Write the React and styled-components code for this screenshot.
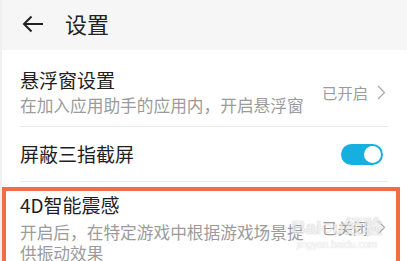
import React from "react";
import styled, { createGlobalStyle } from "styled-components";

const Global = createGlobalStyle`
  html, body { margin: 0; padding: 0; background: #fff; }
  body { font-family: "Noto Sans CJK SC", "Noto Sans", sans-serif; }
  * { box-sizing: border-box; }
`;

const Page = styled.div`
  position: relative;
  width: 407px;
  height: 261px;
  overflow: hidden;
  background: #fff;
  border-left: 2px solid #f0f0f0;
`;

const Header = styled.div`
  height: 50px;
  background: #f6f6f6;
  display: flex;
  align-items: center;
  padding-left: 20px;
  gap: 21px;
`;

const HeaderTitle = styled.div`
  font-size: 22px;
  line-height: 28px;
  color: #222;
  margin-top: -4px;
`;

const BackIcon = styled.svg`
  width: 22px;
  height: 18px;
  margin-top: -2px;
`;

const Row = styled.div`
  margin: 0 19px 0 18px;
  display: flex;
  align-items: ${(p) => p.$align || "center"};
  gap: 12px;
  padding: ${(p) => p.$pad};
  min-height: ${(p) => p.$h || 0}px;
  border-bottom: ${(p) => (p.$last ? "none" : "1px solid #ebebeb")};
`;

const TextCol = styled.div`
  flex: 1;
  min-width: 0;
`;

const Title = styled.div`
  font-size: 19px;
  line-height: 24px;
  color: #1e1e1e;
`;

const Sub = styled.div`
  font-size: 16.7px;
  line-height: ${(p) => p.$lh || 21}px;
  color: #9b9b9b;
  margin-top: ${(p) => p.$mt || 3}px;
`;

const Right = styled.div`
  display: flex;
  align-items: center;
  gap: 9px;
  padding-right: 2px;
  margin-top: ${(p) => p.$mt || 0}px;
  font-size: 15.3px;
  line-height: 20px;
  color: #9b9b9b;
  white-space: nowrap;
`;

const Chevron = styled.svg`
  width: 9px;
  height: 15px;
`;

const Toggle = styled.div`
  width: 42px;
  height: 21px;
  border-radius: 11px;
  background: #17aee0;
  margin-right: 5px;
  display: flex;
  align-items: center;
  justify-content: flex-end;
  padding-right: 2px;
`;

const Knob = styled.div`
  width: 17px;
  height: 17px;
  border-radius: 50%;
  background: #fff;
`;

const Highlight = styled.div`
  position: absolute;
  left: 0;
  top: 187px;
  width: 398px;
  height: 90px;
  border: 4px solid #f26d42;
  pointer-events: none;
`;

const Watermark = styled.div`
  position: absolute;
  left: 290px;
  top: 217px;
  width: 90px;
  display: flex;
  flex-direction: column;
  align-items: center;
  pointer-events: none;
  opacity: 0.7;
`;

const WmMain = styled.div`
  font-family: "Liberation Sans", "Noto Sans CJK SC", sans-serif;
  font-size: 19px;
  line-height: 22px;
  font-weight: bold;
  color: rgba(255, 255, 255, 0.8);
  text-shadow: 0 0 1px rgba(140, 140, 140, 0.7), 0 0 1px rgba(140, 140, 140, 0.5);
  white-space: nowrap;
`;

const WmSub = styled.div`
  font-family: "Liberation Sans", sans-serif;
  font-size: 10px;
  line-height: 12px;
  color: rgba(255, 255, 255, 0.8);
  text-shadow: 0 0 1px rgba(140, 140, 140, 0.6);
`;

const ChevronIcon = () => (
  <Chevron viewBox="0 0 9 15">
    <path d="M1 1 L7.5 7.5 L1 14" fill="none" stroke="#a8a8a8" strokeWidth="1.2" />
  </Chevron>
);

export default function App() {
  return (
    <>
      <Global />
      <Page>
        <Header>
          <BackIcon viewBox="0 0 22 18">
            <path d="M21 9 H2 M9.5 1.5 L2 9 L9.5 16.5" fill="none" stroke="#222" strokeWidth="2" />
          </BackIcon>
          <HeaderTitle>设置</HeaderTitle>
        </Header>

        <Row $pad="18px 0 10px 0">
          <TextCol>
            <Title>悬浮窗设置</Title>
            <Sub>在加入应用助手的应用内，开启悬浮窗</Sub>
          </TextCol>
          <Right>
            已开启
            <ChevronIcon />
          </Right>
        </Row>

        <Row $pad="0" $h={55}>
          <TextCol>
            <Title>屏蔽三指截屏</Title>
          </TextCol>
          <Toggle>
            <Knob />
          </Toggle>
        </Row>

        <Row $pad="11px 0 12px 0" $align="flex-start" $last>
          <TextCol>
            <Title>4D智能震感</Title>
            <Sub $mt={5} $lh={20.5}>开启后，在特定游戏中根据游戏场景提供振动效果</Sub>
          </TextCol>
          <Right $mt={24}>
            已关闭
            <ChevronIcon />
          </Right>
        </Row>

        <Watermark>
          <WmMain>Bai◌u经验</WmMain>
          <WmSub>jingyan.baidu.com</WmSub>
        </Watermark>
        <Highlight />
      </Page>
    </>
  );
}
